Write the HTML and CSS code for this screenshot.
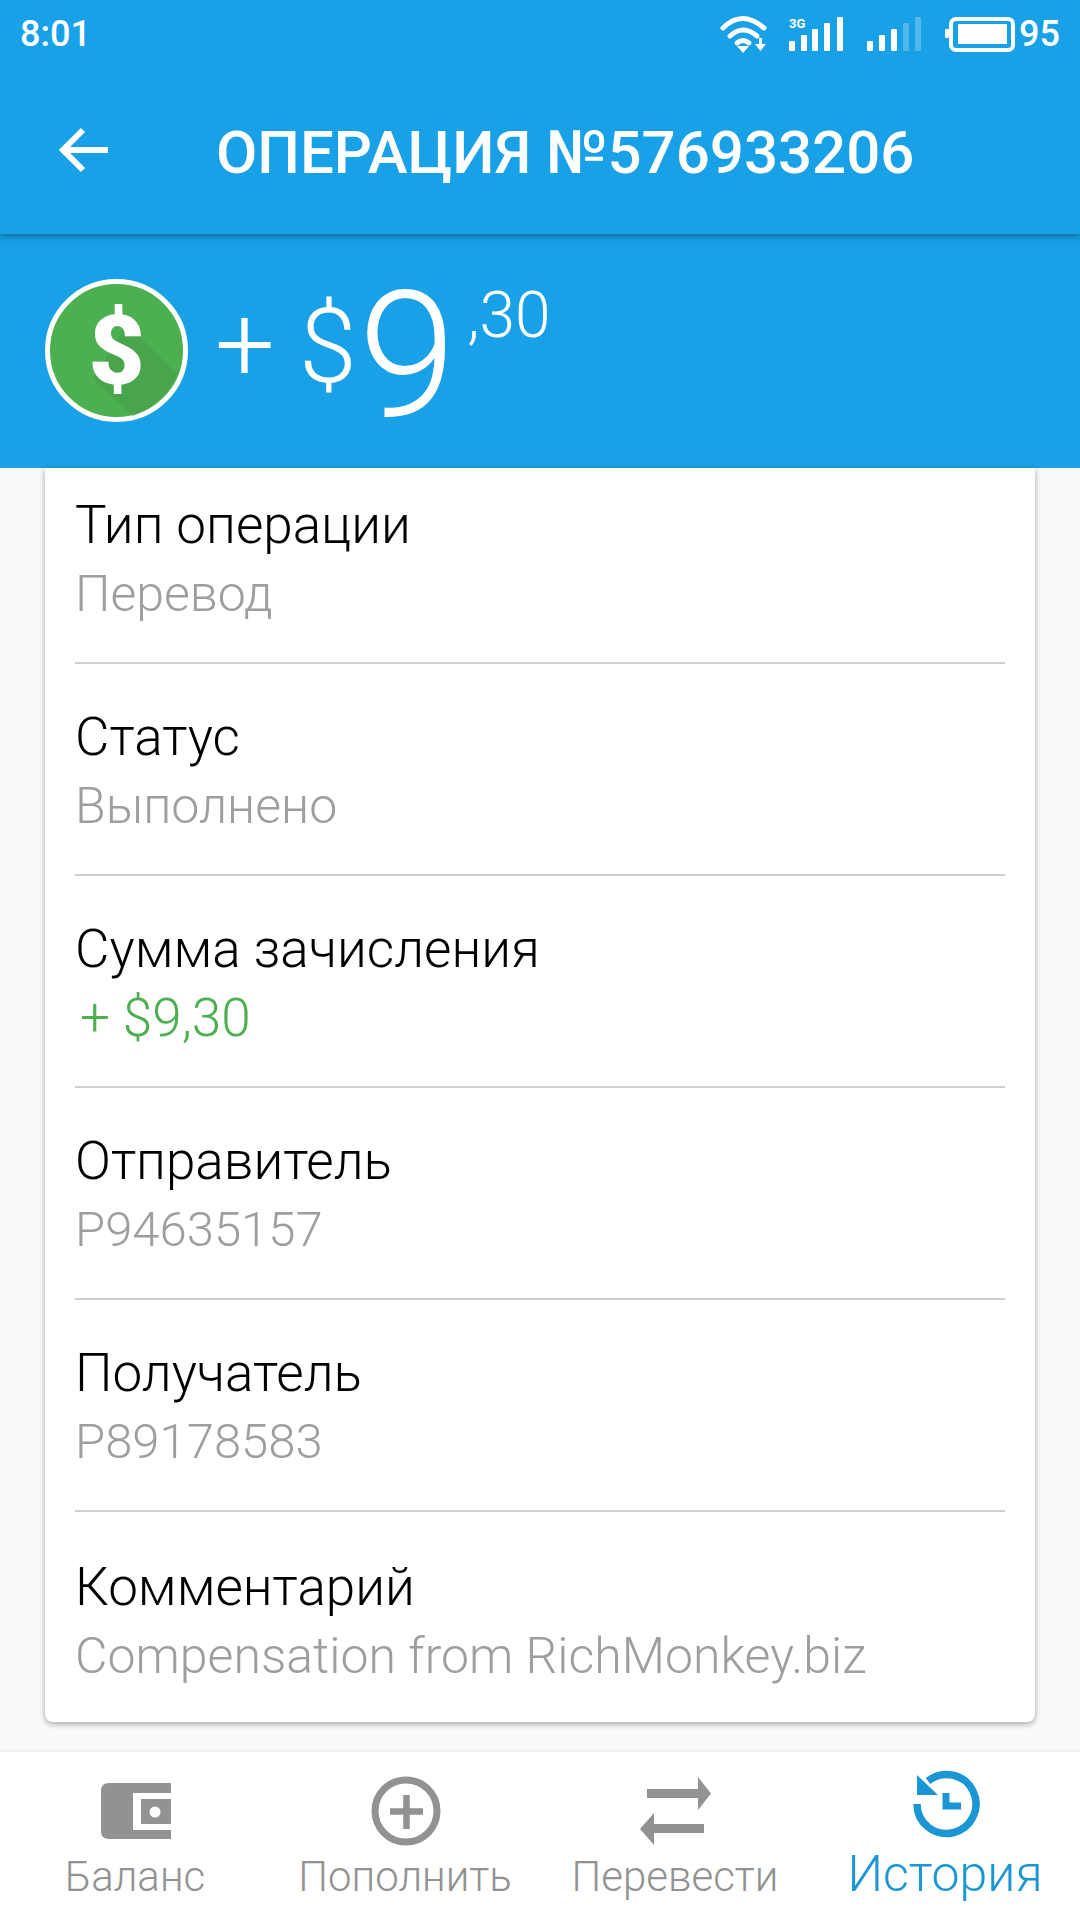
FILE: index.html
```html
<!DOCTYPE html>
<html lang="ru">
<head>
    <meta charset="UTF-8">
    <title>Операция</title>
    <link rel="stylesheet" href="styles.css">
</head>
<body>
<div class="page">
    <div class="header">
        <div class="status">
            <span class="time">8:01</span>
            <div class="status-right">
                <svg class="status-icons" width="340" height="60" viewBox="720 3 340 60">
                    <!-- wifi -->
                    <g fill="none" stroke="#fff" stroke-width="5" stroke-linecap="round">
                        <path d="M723 27 Q742 8 764 27"/>
                        <path d="M730 35 Q743 23 757 35"/>
                        <path d="M737 42 Q743 37 749 42"/>
                    </g>
                    <path d="M737 45 L743 52 L749 45 Z" fill="#fff"/>
                    <path d="M759 37 h3 v6 h4 l-5.500 7 l-5.500 -7 h4 Z" fill="#fff"/>
                    <!-- sim 1 -->
                    <text class="net" x="789" y="27">3G</text>
                    <rect x="789" y="40" width="6" height="10" rx="1" fill="#fff"/>
                    <rect x="801" y="34" width="6" height="16" rx="1" fill="#fff"/>
                    <rect x="812" y="28" width="6" height="22" rx="1" fill="#fff"/>
                    <rect x="824" y="22" width="6" height="28" rx="1" fill="#fff"/>
                    <rect x="837" y="16" width="6" height="34" rx="1" fill="#fff"/>
                    <!-- sim 2 -->
                    <rect x="867" y="40" width="6" height="10" rx="1" fill="#fff"/>
                    <rect x="879" y="34" width="6" height="16" rx="1" fill="#fff"/>
                    <rect x="891" y="28" width="6" height="22" rx="1" fill="#fff"/>
                    <rect x="903" y="22" width="6" height="28" rx="1" fill="#fff" opacity="0.25"/>
                    <rect x="915" y="16" width="6" height="34" rx="1" fill="#fff" opacity="0.25"/>
                    <!-- battery -->
                    <rect x="951" y="18" width="62" height="31" rx="5" fill="none" stroke="#fff" stroke-width="4"/>
                    <rect x="958" y="23" width="49" height="20" fill="#fff"/>
                    <rect x="945" y="28" width="4" height="9" rx="1" fill="#fff"/>
                </svg>
                <span class="battery">95</span>
            </div>
        </div>

        <div class="toolbar">
            <svg class="back" width="52" height="50" viewBox="0 0 52 50">
                <path d="M50 25 H5 M25 5 L5 25 L25 45" fill="none" stroke="#fff" stroke-width="6"/>
            </svg>
            <h1 class="title">ОПЕРАЦИЯ №576933206</h1>
        </div>
    </div>

    <div class="amount">
        <svg class="coin" width="143" height="143" viewBox="0 0 143 143">
            <circle cx="71.500" cy="71.500" r="69" fill="#4caf50" stroke="#fff" stroke-width="5"/>
            <path d="M82 45 L132 95 Q118 125 88 137 L48 100 Z" fill="#469e4a" opacity="0.6"/>
            <text class="coin-sign" x="71.500" y="105">$</text>
        </svg>
        <span class="plus">+</span>
        <span class="dollar">$</span>
        <span class="whole">9</span>
        <span class="cents">,30</span>
    </div>

    <div class="content">
        <div class="card">
            <div class="row">
                <div class="label">Тип операции</div>
                <div class="value">Перевод</div>
            </div>
            <div class="row">
                <div class="label">Статус</div>
                <div class="value">Выполнено</div>
            </div>
            <div class="row">
                <div class="label">Сумма зачисления</div>
                <div class="value green">+ $9,30</div>
            </div>
            <div class="row">
                <div class="label">Отправитель</div>
                <div class="value code">P94635157</div>
            </div>
            <div class="row">
                <div class="label">Получатель</div>
                <div class="value code">P89178583</div>
            </div>
            <div class="row">
                <div class="label">Комментарий</div>
                <div class="value">Compensation from RichMonkey.biz</div>
            </div>
        </div>
    </div>

    <div class="nav">
        <div class="nav-item">
            <svg class="nav-icon" width="100" height="84" viewBox="85 1770 100 84">
                <path d="M171 1783 H109 Q101 1783 101 1791 V1831 Q101 1839 109 1839 H171 V1830 H133 V1793 H171 Z M171 1799 H141 V1824 H171 Z" fill="#929292" fill-rule="evenodd"/>
                <circle cx="155" cy="1812" r="5.500" fill="#fff"/>
            </svg>
            <span class="nav-label">Баланс</span>
        </div>
        <div class="nav-item">
            <svg class="nav-icon" width="100" height="84" viewBox="355 1770 100 84">
                <circle cx="406" cy="1811" r="31" fill="none" stroke="#929292" stroke-width="7"/>
                <path d="M390 1811.500 H423 M406.500 1795 V1829" stroke="#929292" stroke-width="6.500"/>
            </svg>
            <span class="nav-label">Пополнить</span>
        </div>
        <div class="nav-item">
            <svg class="nav-icon" width="100" height="84" viewBox="625 1770 100 84">
                <path d="M647 1789 H698 V1777 L711 1793.500 L698 1810 V1798 H647 Z" fill="#929292"/>
                <path d="M704 1824 H654 V1813 L640 1829 L654 1845 V1833 H704 Z" fill="#929292"/>
            </svg>
            <span class="nav-label">Перевести</span>
        </div>
        <div class="nav-item active">
            <svg class="nav-icon" width="100" height="84" viewBox="895 1770 100 84">
                <path d="M917 1804 A29.500 29.500 0 1 0 928 1781" fill="none" stroke="#1a96d4" stroke-width="7.500"/>
                <path d="M917 1775 L938 1795 H917 Z" fill="#1a96d4"/>
                <path d="M946 1793 V1806 H961" fill="none" stroke="#1a96d4" stroke-width="7"/>
            </svg>
            <span class="nav-label">История</span>
        </div>
    </div>
</div>
</body>
</html>
```

FILE: styles.css
```css
* {
    padding: 0;
    margin: 0;
    box-sizing: border-box;
}

body {
    font-family: Roboto, "Liberation Sans", sans-serif;
    background: #fafafa;
}

.page {
    width: 1080px;
    height: 1920px;
    display: flex;
    flex-direction: column;
    overflow: hidden;
}

.header {
    background: #18a1e7;
    position: relative;
    z-index: 2;
    box-shadow: 0 3px 6px rgba(0, 0, 0, 0.3);
}

.status {
    height: 60px;
    color: #fff;
    display: flex;
    align-items: center;
    justify-content: space-between;
    padding: 8px 20px 0 20px;
    font-weight: 500;
    font-size: 36px;
}

.status-right {
    display: flex;
    align-items: center;
}

.status-icons {
    display: block;
}

.net {
    font-size: 13px;
    font-weight: 700;
    fill: #fff;
}

.battery {
    margin-left: -41px;
}

.toolbar {
    height: 174px;
    display: flex;
    align-items: center;
    padding: 10px 0 0 58px;
}

.back {
    flex-shrink: 0;
    margin-top: -5px;
}

.title {
    margin-left: 106px;
    font-size: 60px;
    font-weight: 500;
    color: #fff;
    white-space: nowrap;
}

.amount {
    height: 234px;
    background: #18a1e7;
    color: #fff;
    display: flex;
    align-items: flex-start;
    padding: 45px 0 0 45px;
}

.coin {
    flex-shrink: 0;
}

.coin-sign {
    font-size: 97px;
    font-weight: 900;
    fill: #fff;
    text-anchor: middle;
}

.plus {
    font-size: 106px;
    line-height: 106px;
    margin: 12px 0 0 27px;
    font-weight: 300;
}

.dollar {
    font-size: 104px;
    line-height: 104px;
    margin: 16px 0 0 24px;
    font-weight: 300;
}

.whole {
    font-size: 176px;
    line-height: 176px;
    margin: -11px 0 0 2px;
    font-weight: 300;
}

.cents {
    font-size: 64px;
    line-height: 64px;
    margin: 5px 0 0 11px;
    font-weight: 300;
}

.content {
    flex: 1;
    padding: 0 45px;
}

.card {
    height: 1254px;
    background: #fff;
    border-radius: 0 0 8px 8px;
    box-shadow: 0 2px 6px rgba(0, 0, 0, 0.35);
    padding: 0 30px;
}

.row {
    height: 212px;
    border-bottom: 2px solid #d0d0d0;
    display: flex;
    flex-direction: column;
    justify-content: flex-end;
    padding-bottom: 33px;
}

.row:first-child {
    height: 196px;
}

.row:last-child {
    border-bottom: 0;
    padding-bottom: 33px;
}

.label {
    font-size: 53px;
    line-height: 68px;
    font-weight: 350;
    color: #000;
}

.value {
    font-size: 50px;
    line-height: 70px;
    font-weight: 300;
    color: #9e9e9e;
}

.green {
    font-size: 53px;
    color: #4caf50;
    padding-left: 5px;
}

.code {
    font-size: 49px;
}

.nav {
    height: 168px;
    background: #fff;
    display: grid;
    grid-template-columns: repeat(4, 1fr);
    box-shadow: 0 -1px 3px rgba(0, 0, 0, 0.08);
}

.nav-item {
    display: flex;
    flex-direction: column;
    align-items: center;
    padding-top: 18px;
    color: #929292;
}

.nav-icon {
    display: block;
    flex-shrink: 0;
}

.nav-label {
    font-size: 42px;
    line-height: 50px;
    font-weight: 300;
    white-space: nowrap;
    margin-top: -2px;
}

.active {
    color: #1a96d4;
}

.active .nav-label {
    font-size: 50px;
    margin-top: -5px;
}
```
